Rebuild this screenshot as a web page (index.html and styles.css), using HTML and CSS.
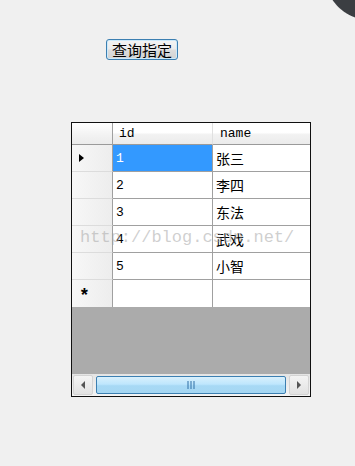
FILE: index.html
```html
<!DOCTYPE html>
<html lang="zh-CN">
<head>
  <meta charset="UTF-8" />
  <title>查询指定</title>
  <link rel="stylesheet" href="styles.css">
</head>
<body>
<div id="corner"></div>
<div id="form">
  <button type="button" class="query-btn">查询指定</button>

  <div class="grid">
    <div class="grid-body">
      <div class="cell rowhdr head"></div>
      <div class="cell colhdr">id</div>
      <div class="cell colhdr last">name</div>

      <div class="cell rowhdr"><span class="arrow"></span></div>
      <div class="cell selected">1</div>
      <div class="cell last">张三</div>

      <div class="cell rowhdr"></div>
      <div class="cell">2</div>
      <div class="cell last">李四</div>

      <div class="cell rowhdr"></div>
      <div class="cell">3</div>
      <div class="cell last">东法</div>

      <div class="cell rowhdr"></div>
      <div class="cell">4</div>
      <div class="cell last">武戏</div>

      <div class="cell rowhdr"></div>
      <div class="cell">5</div>
      <div class="cell last">小智</div>

      <div class="cell rowhdr newrow">*</div>
      <div class="cell newrow"></div>
      <div class="cell last newrow"></div>
    </div>
    <div class="empty"></div>
    <div class="hscroll">
      <div class="sbtn">
        <svg width="6" height="8" viewBox="0 0 6 8"><path d="M5 0 L1 4 L5 8 Z" fill="#555"/></svg>
      </div>
      <div class="track">
        <div class="thumb">
          <svg width="9" height="8" viewBox="0 0 9 8"><path d="M1 0V8M4 0V8M7 0V8" stroke="#2f6fa5" stroke-width="1"/></svg>
        </div>
      </div>
      <div class="sbtn">
        <svg width="6" height="8" viewBox="0 0 6 8"><path d="M1 0 L5 4 L1 8 Z" fill="#555"/></svg>
      </div>
    </div>
  </div>
</div>
<div class="watermark">http://blog.csdn.net/</div>
</body>
</html>
```

FILE: styles.css
```css
html, body {
  margin: 0;
  padding: 0;
  height: 100%;
  overflow: hidden;
  background: #f0f0f0;
  font-family: "Liberation Mono", "Noto Sans CJK SC", monospace;
  color: #000;
}
/* dark circle peeking in at the top right corner */
#corner {
  position: absolute;
  top: 0;
  right: 0;
  width: 30px;
  height: 22px;
  background: radial-gradient(circle at 45px -25px, #3b3e42 44.5px, rgba(59, 62, 66, 0) 45.5px);
}
#form {
  display: flex;
  flex-direction: column;
  align-items: flex-start;
  padding-top: 39px;
}
.query-btn {
  margin-left: 106px;
  width: 72px;
  height: 21px;
  padding: 0;
  font-family: "Noto Sans CJK SC", sans-serif;
  font-size: 15px;
  line-height: 17px;
  color: #000;
  border: 1px solid #3c7fb1;
  border-radius: 3px;
  background: linear-gradient(#f4f4f4 0%, #ececec 48%, #dddddd 52%, #d2d2d2 100%);
  box-shadow: inset 0 0 0 1px #cdeafb;
}
.grid {
  margin-left: 71px;
  margin-top: 62px;
  width: 238px;
  border: 1px solid #101010;
  display: flex;
  flex-direction: column;
}
.grid-body {
  display: grid;
  grid-template-columns: 41px 100px 97px;
  grid-template-rows: 22px repeat(6, 27px);
  background: #fff;
}
.cell {
  box-sizing: border-box;
  border-right: 1px solid #a0a0a0;
  border-bottom: 1px solid #a0a0a0;
  font-size: 13px;
  padding-left: 3px;
  display: flex;
  align-items: center;
}
.cell.last {
  border-right: none;
  font-family: "Noto Sans CJK SC", sans-serif;
  font-size: 14px;
}
.cell.newrow {
  border-bottom: none;
}
.colhdr {
  background: linear-gradient(#ffffff 0%, #ffffff 45%, #f2f2f2 55%, #ebebeb 100%);
  border-right: 1px solid #e0e0e0;
  border-bottom: 1px solid #9a9a9a;
  padding-left: 6px;
  font-family: "Liberation Mono", monospace;
  font-size: 13px;
}
.colhdr.last {
  font-family: "Liberation Mono", monospace;
  font-size: 13px;
  padding-left: 7px;
}
.rowhdr {
  background: linear-gradient(90deg, #f7f7f7, #ededed);
  border-right: 1px solid #a0a0a0;
  border-bottom: 1px solid #dcdcdc;
  padding-left: 7px;
}
.rowhdr.head {
  background: linear-gradient(#ffffff 0%, #f2f2f2 60%, #ebebeb 100%);
  border-bottom: 1px solid #9a9a9a;
}
.rowhdr.newrow {
  font-size: 18px;
  font-weight: bold;
  padding-left: 7px;
  padding-top: 5px;
}
.arrow {
  width: 0;
  height: 0;
  border-top: 4px solid transparent;
  border-bottom: 4px solid transparent;
  border-left: 5px solid #000;
}
.selected {
  background: #3399ff;
  color: #fff;
}
.empty {
  height: 67px;
  background: #ababab;
}
.hscroll {
  height: 22px;
  display: flex;
  align-items: center;
  gap: 2px;
  padding: 0 1px;
  background: linear-gradient(#e4e4e4, #f4f4f4);
}
.sbtn {
  width: 20px;
  height: 20px;
  box-sizing: border-box;
  border: 1px solid #d4d4d4;
  border-radius: 2px;
  background: linear-gradient(#f4f4f4, #e2e2e2);
  display: flex;
  align-items: center;
  justify-content: center;
}
.track {
  flex: 1;
  height: 20px;
  display: flex;
  align-items: center;
}
.thumb {
  flex: 1;
  height: 18px;
  margin: 0 1px;
  box-sizing: border-box;
  border: 1px solid #3c7fb1;
  border-radius: 2px;
  background: linear-gradient(#d9f0fc 0%, #bee6fd 45%, #a7d9f5 55%, #a6d7f3 100%);
  display: flex;
  align-items: center;
  justify-content: center;
}
.watermark {
  position: absolute;
  left: 80px;
  top: 228px;
  font-family: "Liberation Mono", monospace;
  font-size: 17px;
  color: rgba(160, 160, 160, 0.5);
  pointer-events: none;
}
```
